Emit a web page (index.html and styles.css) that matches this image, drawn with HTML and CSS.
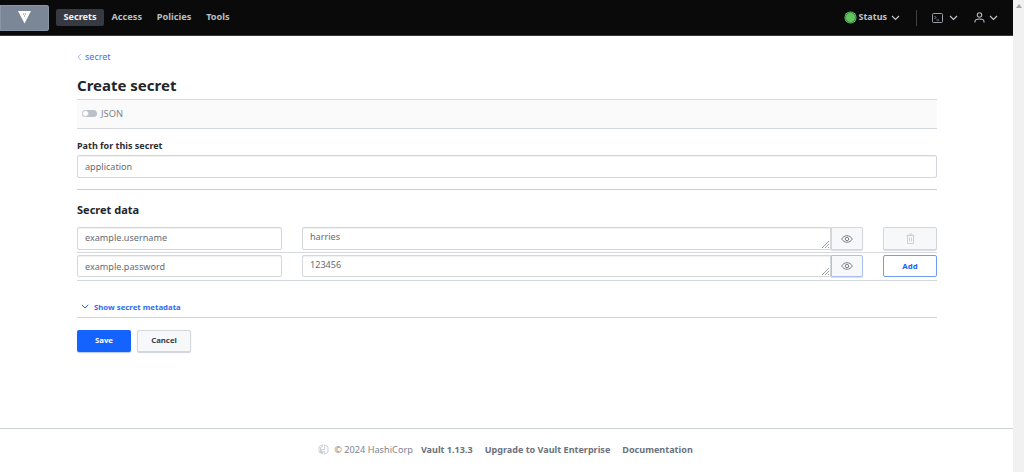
FILE: index.html
```html
<!DOCTYPE html>
<html lang="en">
<head>
<meta charset="utf-8">
<title>Create secret</title>
<link rel="stylesheet" href="styles.css">
</head>
<body>
<div class="page">
  <header class="nav">
    <a class="logo"><svg width="13" height="13" viewBox="0 0 13 13"><path d="M0 0H13L6.5 12.500Z" fill="#fff"/><path d="M5 2.500h1v1H5zM7 2.500h1v1H7zM6 4.400h1v1H6z" fill="#7a8797"/></svg></a>
    <nav class="menu">
      <a class="menu-item active">Secrets</a>
      <a class="menu-item">Access</a>
      <a class="menu-item">Policies</a>
      <a class="menu-item">Tools</a>
    </nav>
    <div class="nav-right">
      <span class="status-dot"></span>
      <span class="status">Status</span>
      <svg class="chev" width="9" height="6" viewBox="0 0 9 6"><path d="M1 1l3.500 3.500L8 1" fill="none" stroke="#c2c5cb" stroke-width="1.200"/></svg>
      <span class="divider"></span>
      <svg class="term" width="11" height="10" viewBox="0 0 11 10"><rect x=".5" y=".5" width="10" height="9" rx="1" fill="none" stroke="#9a9fa8"/><path d="M2.500 3l1.500 1.500L2.500 6M4.500 7H7" fill="none" stroke="#9a9fa8" stroke-width=".9"/></svg>
      <svg class="chev gap1" width="9" height="6" viewBox="0 0 9 6"><path d="M1 1l3.500 3.500L8 1" fill="none" stroke="#c2c5cb" stroke-width="1.200"/></svg>
      <svg class="user" width="11" height="11" viewBox="0 0 11 11"><circle cx="5.500" cy="3" r="2.200" fill="none" stroke="#b5b9c0" stroke-width="1.100"/><path d="M1 10.500V9.500C1 8 2.500 7 5.500 7S10 8 10 9.500V10.500" fill="none" stroke="#b5b9c0" stroke-width="1.100"/></svg>
      <svg class="chev gap2" width="9" height="6" viewBox="0 0 9 6"><path d="M1 1l3.500 3.500L8 1" fill="none" stroke="#c2c5cb" stroke-width="1.200"/></svg>
    </div>
  </header>

  <main class="main">
    <a class="crumb"><svg width="5" height="8" viewBox="0 0 5 8"><path d="M4 .8L1 4l3 3.200" fill="none" stroke="#a9bdf5" stroke-width="1"/></svg>secret</a>
    <h1 class="title">Create secret</h1>
    <div class="toolbar"><span class="toggle"><span class="knob"></span></span><span class="toggle-label">JSON</span></div>
    <label class="path-label">Path for this secret</label>
    <div class="field path-field">application</div>
    <div class="section">
      <h2 class="section-title">Secret data</h2>
      <div class="row">
        <div class="field key">example.username</div>
        <div class="value">
          <div class="textarea">harries<svg class="grip" width="7" height="7" viewBox="0 0 7 7"><path d="M0 7L7 0M3 7L7 3M6 7L7 6" stroke="#777" stroke-width=".7"/></svg></div>
          <button class="eye"><svg width="12" height="8" viewBox="0 0 12 8"><path d="M.7 4C2 1.800 3.800.7 6 .7S10 1.800 11.300 4C10 6.200 8.200 7.300 6 7.300S2 6.200.7 4Z" fill="none" stroke="#7b818a"/><circle cx="6" cy="4" r="1.700" fill="none" stroke="#7b818a"/></svg></button>
        </div>
        <button class="btn trash"><svg width="9" height="11" viewBox="0 0 9 11"><path d="M.5 2.500h8M3 2.500V1h3v1.500M1.500 2.500v8h6v-8M3.500 4.500v4M5.500 4.500v4" fill="none" stroke="#ced2d8"/></svg></button>
      </div>
      <div class="row">
        <div class="field key">example.password</div>
        <div class="value">
          <div class="textarea">123456<svg class="grip" width="7" height="7" viewBox="0 0 7 7"><path d="M0 7L7 0M3 7L7 3M6 7L7 6" stroke="#777" stroke-width=".7"/></svg></div>
          <button class="eye focus"><svg width="12" height="8" viewBox="0 0 12 8"><path d="M.7 4C2 1.800 3.800.7 6 .7S10 1.800 11.300 4C10 6.200 8.200 7.300 6 7.300S2 6.200.7 4Z" fill="none" stroke="#7b818a"/><circle cx="6" cy="4" r="1.700" fill="none" stroke="#7b818a"/></svg></button>
        </div>
        <button class="btn add">Add</button>
      </div>
    </div>
    <a class="meta"><svg width="8" height="5" viewBox="0 0 8 5"><path d="M.8.8L4 4l3.200-3.200" fill="none" stroke="#1563ff" stroke-width="1"/></svg><span>Show secret metadata</span></a>
    <div class="actions">
      <button class="btn save">Save</button>
      <button class="btn cancel">Cancel</button>
    </div>
  </main>

  <footer class="footer">
    <svg width="11" height="11" viewBox="0 0 11 11"><path d="M4.500 .8L1 2.800v5.400l1.500.9V3.700l2-1.200zM6.500 .8L10 2.800v5.400l-3.500 2V7.500h-2v2.700l-1-.6V5.500h3V1.800z" fill="none" stroke="#b6bcc5" stroke-width=".7"/></svg>
    <span class="copy">© 2024 HashiCorp</span>
    <a>Vault 1.13.3</a>
    <a>Upgrade to Vault Enterprise</a>
    <a>Documentation</a>
  </footer>
</div>
<div class="scrollbar"><span class="arrow"></span></div>
</body>
</html>
```
FILE: styles.css
```css
* { box-sizing: border-box; }
html, body { margin: 0; height: 472px; overflow: hidden; }
body { display: flex; font-family: "Noto Sans", sans-serif; color: #1f2328; background: #fff; }
.page { width: 1013px; height: 472px; display: flex; flex-direction: column; }
.scrollbar { width: 11px; background: #f1f1f1; position: relative; }
.arrow { position: absolute; left: 3px; top: 4px; border: 3px solid transparent; border-top: 0; border-bottom: 4px solid #a3a3a3; }

.nav { height: 36px; background: #0a0a0a; border-bottom: 1px solid #3a3a3a; display: flex; align-items: center; flex-shrink: 0; }
.logo { width: 49px; height: 26px; background: #7b8796; border-radius: 0 3px 3px 0; display: flex; align-items: center; justify-content: flex-end; padding-right: 18px; box-shadow: inset 0 0 0 1px #8a95a3; }
.menu { display: flex; align-items: center; margin-left: 7px; }
.menu-item { font-size: 9.200px; font-weight: 700; color: #bcc0c6; height: 17px; line-height: 16px; padding: 0 7.400px; border-radius: 2px; }
.menu-item.active { background: #373a42; color: #f2f3f5; }
.nav-right { margin-left: auto; display: flex; align-items: center; padding-right: 15px; }
.status-dot { width: 11px; height: 11px; border-radius: 50%; background: #62c45f; border: 1.500px solid #2f8a3a; box-shadow: 0 0 0 .5px #7fd07c; }
.status { font-size: 9px; line-height: 12px; padding-bottom: 2px; font-weight: 700; color: #c0c3c9; margin-left: 2px; }
.chev { display: block; margin-left: 4px; }
.divider { width: 1px; height: 16px; background: #3d4045; margin: 0 15px 0 16px; }
.gap1 { margin-left: 6px; }
.user { margin-left: 16px; }
.gap2 { margin-left: 4px; }

.main { flex: 1; padding: 15px 76px 0 77px; display: flex; flex-direction: column; align-items: stretch; }
.crumb { font-size: 9px; line-height: 12px; color: #3f74f0; display: flex; align-items: center; gap: 3px; }
.title { font-size: 15px; line-height: 22px; font-weight: 700; margin: 11px 0 0; color: #22262b; }
.toolbar { height: 30px; margin-top: 3px; background: #fafafa; border-top: 1px solid #d5d8dd; border-bottom: 1px solid #d5d8dd; display: flex; align-items: center; padding-left: 5px; padding-bottom: 1px; }
.toggle { width: 15px; height: 7px; border-radius: 4px; background: #bcc0c7; position: relative; }
.knob { position: absolute; left: 0; top: 0; width: 7px; height: 7px; border-radius: 50%; background: #fff; border: 1px solid #c7cad0; }
.toggle-label { font-size: 9.300px; color: #7d838d; margin-left: 4px; }
.path-label { font-size: 9px; line-height: 13px; font-weight: 700; margin-top: 10px; margin-bottom: 1px; color: #2a2e33; }
.field { font-size: 9.100px; color: #666c75; background: #fff; border: 1px solid #d3d6db; border-radius: 2px; display: flex; align-items: center; padding-left: 7px; padding-bottom: 1px; box-shadow: inset 0 1px 1px #f0f0f0; }
.path-field { height: 23px; margin-top: 2px; }
.section { margin-top: 11px; border-top: 1px solid #c9ccd2; padding-top: 12px; }
.section-title { font-size: 11px; line-height: 16px; font-weight: 700; margin: 0 0 8px; color: #22262b; }
.row { display: flex; align-items: flex-start; height: 27px; border-bottom: 1px solid #d5d8dd; padding-top: 1px; }
.row .key { padding-bottom: 2px; }
.row + .row { height: 28px; padding-top: 2px; }
.key { width: 205px; height: 23px; flex-shrink: 0; }
.row + .row .key { height: 22px; padding-bottom: 0; }
.value { display: flex; margin-left: 20px; width: 561px; height: 23px; flex-shrink: 0; }
.row + .row .value { height: 22px; }
.textarea { flex: 1; position: relative; font-size: 9.100px; color: #666c75; border: 1px solid #d3d6db; border-radius: 2px 0 0 2px; padding: 2px 0 0 7px; line-height: 14px; box-shadow: inset 0 1px 1px #f0f0f0; }
.grip { position: absolute; right: 1px; bottom: 1px; }
.eye { width: 32px; height: 100%; background: #f7f8fa; border: 1px solid #d3d6db; border-radius: 0 2px 2px 0; padding: 0; display: flex; align-items: center; justify-content: center; box-shadow: 0 1px 1px #d8dbe0; }
.eye.focus { border-color: #a9c0f0; }
.btn { font-family: "Noto Sans", sans-serif; font-size: 7.800px; font-weight: 700; border-radius: 2px; padding: 0; display: flex; align-items: center; justify-content: center; }
.trash { width: 54px; height: 23px; margin-left: 20px; background: #f7f8fa; border: 1px solid #d3d6db; box-shadow: 0 1px 1px #d8dbe0; }
.add { width: 54px; height: 22px; margin-left: 20px; background: #fff; color: #1563ff; border: 1px solid #6f9bf7; }
.meta { margin-top: 17px; height: 17px; display: flex; align-items: center; font-size: 7.800px; font-weight: 700; color: #2f6bf2; padding-left: 4px; gap: 5px; }
.actions { border-top: 1px solid #d0d3d8; display: flex; gap: 6px; padding-top: 12px; margin-top: 2px; }
.save { width: 54px; height: 22px; background: #1563ff; color: #fff; border: 0; padding-bottom: 2px; box-shadow: 0 1px 1px #b9c8e8; }
.cancel { width: 54px; height: 22px; background: #f7f8fa; color: #3b4048; border: 1px solid #d3d6db; padding-bottom: 2px; box-shadow: 0 1px 1px #d0d3d8; }

.footer { height: 44px; flex-shrink: 0; border-top: 1px solid #ccd1d8; display: flex; align-items: center; justify-content: center; font-size: 9.050px; font-weight: 700; color: #6b727c; gap: 12px; padding-bottom: 3px; padding-right: 2px; }
.footer svg { margin-right: -7px; }
.copy { font-size: 9.200px; font-weight: 400; color: #7d838d; margin-right: -4px; }
```
